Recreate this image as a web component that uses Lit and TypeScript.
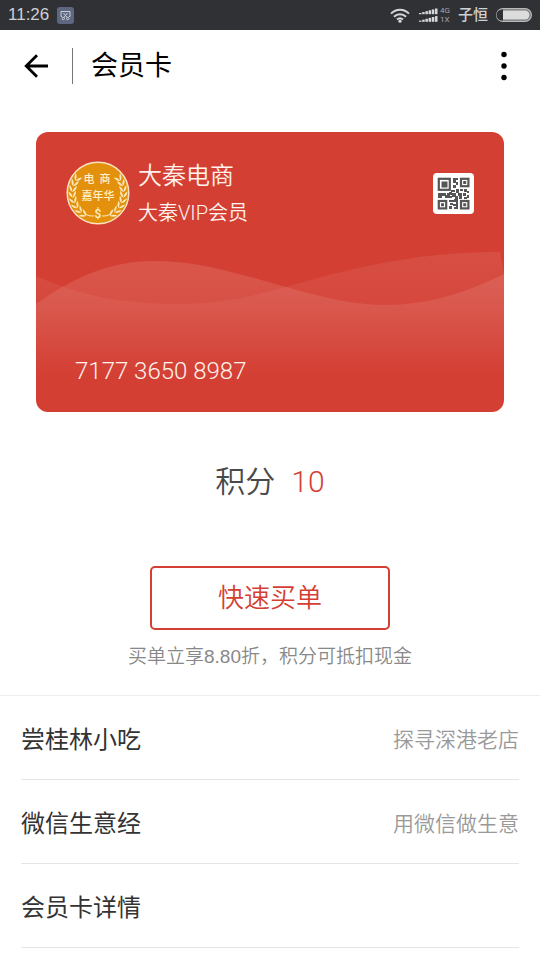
import { LitElement, html, svg, css } from "lit";
import { customElement, property, state } from "lit/decorators.js";

const shared = css`
  * {
    box-sizing: border-box;
  }
  svg {
    display: block;
  }
  button {
    margin: 0;
    padding: 0;
    border: 0;
    background: none;
    color: inherit;
    font: inherit;
    cursor: pointer;
  }
`;

@customElement("status-bar")
class StatusBar extends LitElement {
  static styles = [
    shared,
    css`
      :host {
        display: flex;
        align-items: center;
        justify-content: space-between;
        height: 30px;
        padding: 0 8px;
        background: #303135;
        color: #cfd0d2;
      }
      .group {
        display: flex;
        align-items: center;
        gap: 8px;
      }
      .time {
        font-family: "Liberation Sans", sans-serif;
        font-size: 17px;
        line-height: 20px;
      }
      .net {
        display: flex;
        flex-direction: column;
        font-size: 8px;
        line-height: 9px;
        color: #a5a6a9;
      }
      .signal {
        display: flex;
        align-items: center;
        gap: 2px;
      }
      .carrier {
        font-size: 15px;
        line-height: 20px;
        font-weight: 500;
      }
    `,
  ];

  render() {
    const bars = [0, 1, 2, 3, 4, 5];
    return html`
      <div class="group">
        <span class="time">11:26</span>
        <svg width="17" height="17" viewBox="0 0 17 17" aria-hidden="true">
          <rect width="17" height="17" rx="3" fill="#5d6880" />
          <g fill="none" stroke="#c9ced8" stroke-width="1">
            <path d="M5 9.500H4V4.500h9V9.500h-1M6.500 6l3.700 4.500M10.500 6l-3.700 4.500" />
            <circle cx="6.300" cy="11.500" r="1.200" />
            <circle cx="10.700" cy="11.500" r="1.200" />
          </g>
        </svg>
      </div>
      <div class="group">
        <svg width="20" height="15" viewBox="0 0 20 15" aria-hidden="true">
          <g fill="none" stroke="#d6d7d9" stroke-width="2">
            <path d="M1 5.600C6 .3 14 .3 19 5.600" />
            <path d="M4 8.800c3.400-3.500 8.600-3.500 12 0" />
            <path d="M7 11.600c1.800-1.700 4.200-1.700 6 0" />
          </g>
          <circle cx="10" cy="13.200" r="1.600" fill="#d6d7d9" />
        </svg>
        <div class="signal">
          <svg width="20" height="14" viewBox="0 0 20 14" aria-hidden="true">
            ${bars.map(
              (i) => svg`
                <rect x=${1 + i * 3.2} y=${5 - i * 0.9} width="2.500" height=${1.2 + i * 0.9} fill="#d6d7d9" />
                <rect x=${1 + i * 3.2} y=${12.6 - i * 0.9} width="2.500" height=${1.2 + i * 0.9} fill="#d6d7d9" />`
            )}
          </svg>
          <div class="net"><span>4G</span><span>1X</span></div>
        </div>
        <span class="carrier">子恒</span>
        <svg width="36" height="14" viewBox="0 0 36 14" aria-hidden="true">
          <rect x=".6" y=".6" width="34.800" height="12.800" rx="6.400" fill="#77787b" stroke="#b9babc" stroke-width="1.200" />
          <path d="M7 1.500H6a5.500 5.500 0 0 0 0 11H7z" fill="#303135" />
          <path d="M7 2.500h22a4.500 4.500 0 0 1 0 9H7z" fill="#dcdcdd" />
        </svg>
      </div>
    `;
  }
}

@customElement("title-bar")
class TitleBar extends LitElement {
  @property() heading = "";

  static styles = [
    shared,
    css`
      :host {
        display: flex;
        align-items: center;
        height: 72px;
        padding: 0 24px;
        color: #000;
      }
      .rule {
        width: 1px;
        height: 36px;
        margin: 0 18px 0 24px;
        background: #777;
      }
      h1 {
        flex: 1;
        margin: 0;
        font-size: 27px;
        line-height: 36px;
        font-weight: 400;
      }
    `,
  ];

  render() {
    return html`
      <button aria-label="返回">
        <svg width="24" height="24" viewBox="0 0 24 24" fill="none" stroke="#000" stroke-width="2.800">
          <path d="M24 12H2.500M13 1.200L2.200 12 13 22.800" />
        </svg>
      </button>
      <span class="rule"></span>
      <h1>${this.heading}</h1>
      <button aria-label="更多">
        <svg width="24" height="30" viewBox="0 0 24 30">
          <circle cx="12" cy="3.500" r="2.700" />
          <circle cx="12" cy="15" r="2.700" />
          <circle cx="12" cy="26.500" r="2.700" />
        </svg>
      </button>
    `;
  }
}

@customElement("member-card")
class MemberCard extends LitElement {
  static styles = [
    shared,
    css`
      :host {
        position: relative;
        display: flex;
        flex-direction: column;
        justify-content: space-between;
        min-height: 280px;
        padding: 24px 30px;
        border-radius: 12px;
        overflow: hidden;
        background: #d43f33;
        color: #fff3ee;
      }
      .waves {
        position: absolute;
        inset: 0;
        width: 100%;
        height: 100%;
      }
      .top {
        position: relative;
        display: flex;
        align-items: center;
        gap: 8px;
      }
      .names {
        flex: 1;
      }
      .shop {
        margin: 0;
        font-size: 24px;
        line-height: 40px;
        font-weight: 350;
      }
      .level {
        margin: 0;
        font-size: 20px;
        line-height: 34px;
        font-weight: 350;
      }
      .number {
        position: relative;
        margin: 0;
        padding: 0 9px;
        font-size: 24px;
        line-height: 34px;
        font-weight: 300;
      }
      .seal {
        font-weight: 500;
      }
    `,
  ];

  private leaves() {
    const out = [];
    for (let i = 0; i < 8; i++) {
      const deg = 122 + i * 13;
      const a = (deg * Math.PI) / 180;
      const x = 32 + Math.cos(a) * 25.5;
      const y = 32 + Math.sin(a) * 25.5;
      out.push(svg`
        <g transform="translate(${x} ${y}) rotate(${deg + 90})">
          <path d="M-2 0Q-.5-3.600 4.500-3.800Q2.500-.6-2 0M-2 0Q-.5 3.600 4.500 3.800Q2.500 .6-2 0" />
        </g>`);
    }
    return out;
  }

  render() {
    return html`
      <svg class="waves" viewBox="0 0 468 280" preserveAspectRatio="none" aria-hidden="true">
        <defs>
          <linearGradient id="front" gradientUnits="userSpaceOnUse" x1="0" y1="128" x2="0" y2="246">
            <stop offset="0" stop-color="#fff" stop-opacity=".12" />
            <stop offset=".4" stop-color="#fff" stop-opacity=".09" />
            <stop offset="1" stop-color="#fff" stop-opacity="0" />
          </linearGradient>
          <linearGradient id="back" gradientUnits="userSpaceOnUse" x1="0" y1="120" x2="0" y2="236">
            <stop offset="0" stop-color="#fff" stop-opacity=".08" />
            <stop offset=".4" stop-color="#fff" stop-opacity=".05" />
            <stop offset="1" stop-color="#fff" stop-opacity="0" />
          </linearGradient>
        </defs>
        <path fill="url(#back)" d="M0 144C40 162 82 172 142 172C190 172 216 164 250 155C310 138 376 120 464 120L468 142V280H0Z" />
        <path fill="url(#front)" d="M0 172C36 147 70 129 120 129C164 129 206 143 250 155C286 165 316 173 350 173C390 173 430 161 468 142V280H0Z" />
      </svg>
      <div class="top">
        <svg class="seal" width="64" height="64" viewBox="0 0 64 64" role="img" aria-label="电商嘉年华">
          <circle cx="32" cy="32" r="30.800" fill="#e3900c" stroke="#fbe3c0" stroke-width="1.500" />
          <g fill="#fbe9bd">
            ${this.leaves()}
            <g transform="matrix(-1 0 0 1 64 0)">${this.leaves()}</g>
          </g>
          <path d="M20 53.500q4 2 8 1.500M44 53.500q-4 2-8 1.500" fill="none" stroke="#fbe9bd" />
          <g fill="#fff0c9" text-anchor="middle">
            <text x="23" y="22" font-size="11">电</text>
            <text x="39" y="22" font-size="11">商</text>
            <text x="32" y="39" font-size="11">嘉年华</text>
            <text x="32" y="57" font-size="12">$</text>
          </g>
        </svg>
        <div class="names">
          <p class="shop">大秦电商</p>
          <p class="level">大秦VIP会员</p>
        </div>
        <button aria-label="会员二维码">
          <svg width="41" height="41" viewBox="0 0 41 41">
            <rect width="41" height="41" rx="4" fill="#fff" />
            <g fill="none" stroke="#555" stroke-width="2.200">
              <rect x="5.800" y="5.800" width="11" height="11" />
              <rect x="28" y="5.800" width="7.400" height="7.400" />
              <rect x="5.800" y="28" width="7.400" height="7.400" />
              <rect x="28" y="28" width="7.400" height="7.400" />
            </g>
            <path
              fill="#555"
              d="M8.500 8.500h6v6h-6zM30.200 8h3v3h-3zM8 30.200h3v3H8zM30.200 30.200h3v3h-3zM20 5h5v2h-2v3h-3zM20 12h3v3h-3zM23 9h2v3h-2zM5 20h8v3H9v2H5zM14 20h2v2h-2zM18 17h4v2h-4zM16 19h3v3h-3zM12 22h5v3h-5zM19 20h4v4h-4zM23 16h3v4h-3zM27 16h3v2h-3zM31 16h3v3h-3zM34 18h2v2h-2zM25 20h4v3h-4zM30 20h3v3h-3zM34 22h2v3h-2zM26 23h3v3h-3zM31 24h3v2h-3zM17 23h2v2h-2zM22 23h3v3h-3zM16 27h5v2h-5zM21 26h4v3h-4zM17 30h3v2h-3zM20 31h5v2h-5zM16 33h3v3h-3zM21 34h4v2h-4zM23 29h2v7h-2z"
            />
          </svg>
        </button>
      </div>
      <p class="number">7177 3650 8987</p>
    `;
  }
}

interface Entry {
  label: string;
  note: string;
}

@customElement("app-root")
class AppRoot extends LitElement {
  @state() private entries: Entry[] = [
    { label: "尝桂林小吃", note: "探寻深港老店" },
    { label: "微信生意经", note: "用微信做生意" },
    { label: "会员卡详情", note: "" },
  ];

  static styles = [
    shared,
    css`
      :host {
        display: block;
        min-height: 100vh;
        background: #fff;
        color: #333;
        font-family: Roboto, "Noto Sans CJK SC", sans-serif;
      }
      .hero {
        display: flex;
        flex-direction: column;
        padding: 30px 36px 24px;
        border-bottom: 1px solid #eee;
      }
      .points {
        display: flex;
        justify-content: center;
        gap: 16px;
        margin: 48px 0 62px;
        font-size: 30px;
        line-height: 44px;
        font-weight: 350;
        color: #4a4a4a;
      }
      .count {
        font-weight: 300;
        color: #d43f33;
      }
      .pay {
        align-self: center;
        width: 240px;
        height: 64px;
        border: 2px solid #d43f33;
        border-radius: 5px;
        color: #d43f33;
        font-size: 26px;
        line-height: 36px;
        font-weight: 350;
      }
      .hint {
        margin: 12px 0 0;
        text-align: center;
        font-family: "Liberation Sans", "Noto Sans CJK SC", sans-serif;
        font-size: 19px;
        line-height: 29px;
        font-weight: 350;
        color: #888;
      }
      .list {
        margin: 0;
        padding: 0 21px;
        list-style: none;
      }
      .row {
        display: flex;
        align-items: center;
        justify-content: space-between;
        height: 84px;
        border-bottom: 1px solid #e5e5e5;
        color: #333;
        font-size: 24px;
        text-decoration: none;
      }
      .note {
        font-size: 21px;
        font-weight: 350;
        color: #999;
      }
    `,
  ];

  render() {
    return html`
      <status-bar></status-bar>
      <title-bar heading="会员卡"></title-bar>
      <main>
        <section class="hero">
          <member-card></member-card>
          <div class="points"><span>积分</span><span class="count">10</span></div>
          <button class="pay">快速买单</button>
          <p class="hint">买单立享8.80折，积分可抵扣现金</p>
        </section>
        <ul class="list">
          ${this.entries.map(
            (e) => html`
              <li>
                <a class="row" href="#"><span>${e.label}</span><span class="note">${e.note}</span></a>
              </li>`
          )}
        </ul>
      </main>
    `;
  }
}
